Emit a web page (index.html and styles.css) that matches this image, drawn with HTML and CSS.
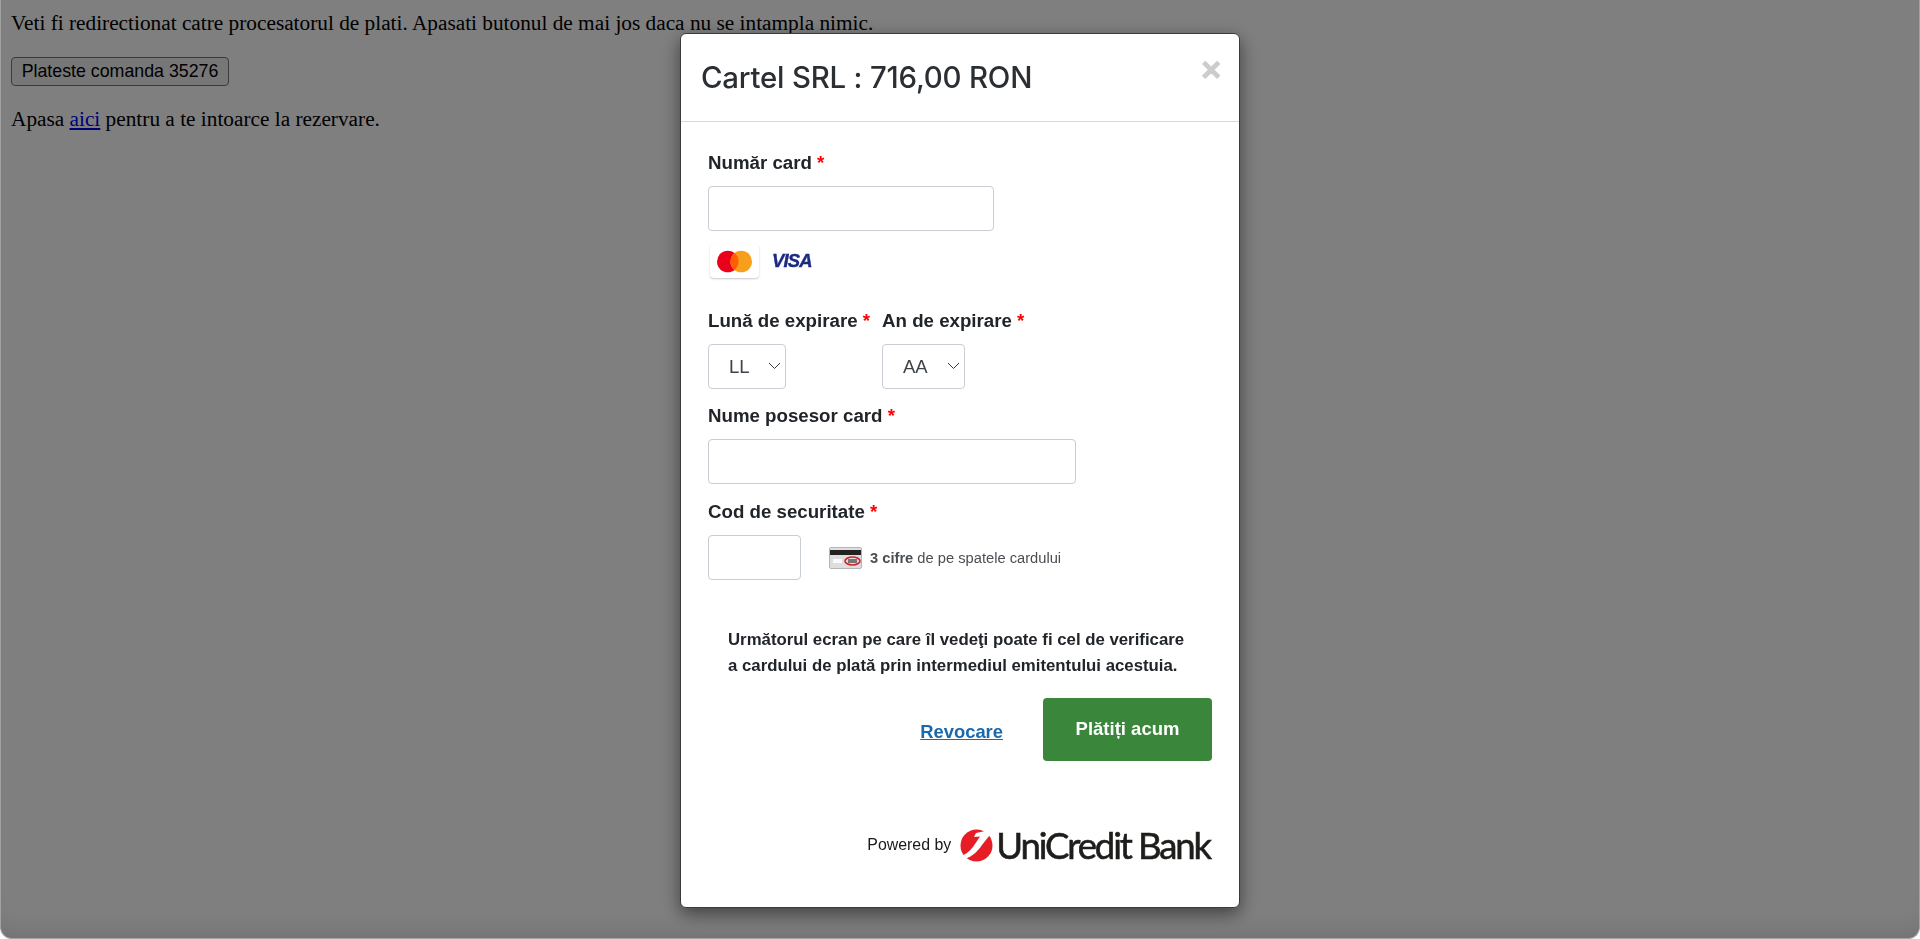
FILE: index.html
```html
<!DOCTYPE html>
<html lang="en">
<head>
    <meta charset="UTF-8">
    <meta name="viewport" content="width=device-width, initial-scale=1.0">
    <title>Plata comanda</title>
    <link rel="stylesheet" href="styles.css">
</head>
<body>
    <div class="page">
        <p class="line">Veti fi redirectionat catre procesatorul de plati. Apasati butonul de mai jos daca nu se intampla nimic.</p>
        <form class="pay-form"><button type="button" class="pay-btn">Plateste comanda 35276</button></form>
        <p class="line">Apasa <a href="#">aici</a> pentru a te intoarce la rezervare.</p>
    </div>

    <div class="overlay">
        <div class="modal">
            <div class="modal-header">
                <h3>Cartel SRL : 716,00 RON</h3>
                <span class="close">&times;</span>
            </div>
            <div class="modal-body">
                <label class="field-label">Număr card <span class="req">*</span></label>
                <input type="text" class="input input-card">
                <div class="card-logos">
                    <span class="mc-box">
                        <svg width="37" height="23" viewBox="0 0 36 22">
                            <circle cx="11.500" cy="11" r="10.500" fill="#eb001b"/>
                            <circle cx="24.500" cy="11" r="10.500" fill="#f79e1b"/>
                            <path d="M18 2.800a10.500 10.500 0 0 1 0 16.400a10.500 10.500 0 0 1 0-16.400z" fill="#ff5f00"/>
                        </svg>
                    </span>
                    <span class="visa">VISA</span>
                </div>

                <div class="expiry-row">
                    <div>
                        <label class="field-label">Lună de expirare <span class="req">*</span></label>
                        <div class="select-wrap select-month">
                            <select class="select"><option>LL</option></select>
                            <svg class="chevron" width="13" height="8" viewBox="0 0 13 8"><path d="M1 1l5.500 5.500L12 1" fill="none" stroke="#343a40" stroke-width="1"/></svg>
                        </div>
                    </div>
                    <div>
                        <label class="field-label">An de expirare <span class="req">*</span></label>
                        <div class="select-wrap select-year">
                            <select class="select"><option>AA</option></select>
                            <svg class="chevron" width="13" height="8" viewBox="0 0 13 8"><path d="M1 1l5.500 5.500L12 1" fill="none" stroke="#343a40" stroke-width="1"/></svg>
                        </div>
                    </div>
                </div>

                <label class="field-label label-name">Nume posesor card <span class="req">*</span></label>
                <input type="text" class="input input-name">

                <label class="field-label label-cvv">Cod de securitate <span class="req">*</span></label>
                <div class="cvv-row">
                    <input type="text" class="input input-cvv">
                    <svg class="cvv-icon" width="33" height="22" viewBox="0 0 33 22">
                        <rect x="0.500" y="0.500" width="32" height="21" rx="1.500" fill="#dedede" stroke="#b5b5b5"/>
                        <rect x="1" y="3" width="31" height="5" fill="#222"/>
                        <rect x="4" y="12" width="9" height="4" fill="#fafafa"/>
                        <rect x="19" y="12" width="9" height="4" fill="#777"/>
                        <ellipse cx="23.500" cy="14" rx="7.500" ry="4" fill="none" stroke="#d9202a" stroke-width="1.600"/>
                    </svg>
                    <span class="cvv-hint"><b>3 cifre</b> de pe spatele cardului</span>
                </div>

                <p class="notice">Următorul ecran pe care îl vedeţi poate fi cel de verificare<br>a cardului de plată prin intermediul emitentului acestuia.</p>

                <div class="actions">
                    <a href="#" class="cancel">Revocare</a>
                    <button type="button" class="submit">Plătiți acum</button>
                </div>

                <div class="powered">
                    <span class="powered-text">Powered by</span>
                    <svg class="uc-mark" width="33" height="33" viewBox="0 0 33 33">
                        <circle cx="16.500" cy="16.500" r="16" fill="#e71d25"/>
                        <path d="M33 2L30 1L16 4L14 8L20 7.500L15 15C12 20 8 24 2 27L5 30C13 27 18 22 22 16z" fill="#fff"/>
                    </svg>
                    <span class="uc-name">UniCredit Bank</span>
                </div>
            </div>
        </div>
    </div>
</body>
</html>
```

FILE: styles.css
```css
html {
    background: #000;
}
body {
    margin: 0;
    height: 939px;
    overflow: hidden;
    background: #fff;
    color: #000;
    font-family: "Liberation Serif", serif;
    font-size: 21.300px;
}
.page {
    padding: 12px 11px 0;
}
.line {
    margin: 0;
    line-height: 23px;
}
.line a {
    color: #00e;
}
.pay-form {
    margin: 22px 0 22px;
}
.pay-btn {
    display: block;
    width: 218px;
    height: 29px;
    padding: 0;
    background: #efefef;
    border: 1.200px solid #767676;
    border-radius: 4px;
    color: #000;
    font-family: "Liberation Sans", sans-serif;
    font-size: 17.800px;
}

.overlay {
    position: fixed;
    top: 0;
    left: 0;
    right: 0;
    bottom: 0;
    display: flex;
    justify-content: center;
    align-items: flex-start;
    background: rgba(0, 0, 0, 0.5);
    border-left: 1.500px solid #a2a2a2;
    border-right: 1.500px solid #a2a2a2;
    border-bottom: 1.500px solid #a2a2a2;
    border-radius: 0 0 12px 12px;
    box-shadow: inset 0 -22px 30px -22px rgba(0, 0, 0, 0.16);
}
.modal {
    width: 560px;
    height: 875px;
    margin-top: 33px;
    background: #fff;
    border: 1px solid #3c3c3c;
    border-radius: 6px;
    box-sizing: border-box;
    box-shadow: 0 6px 18px rgba(0, 0, 0, 0.5);
    font-family: "Liberation Sans", sans-serif;
    color: #212529;
}
.modal-header {
    position: relative;
    height: 87px;
    padding: 0 20px;
    display: flex;
    align-items: center;
    border-bottom: 1px solid #d5d8dc;
}
.modal-header h3 {
    margin: 0;
    font-family: Inter, sans-serif;
    font-size: 29.400px;
    font-weight: 500;
    letter-spacing: -0.200px;
    color: #2b2f33;
}
.close {
    position: absolute;
    top: 18px;
    right: 18px;
    color: #ccc;
    font-family: "Liberation Sans", sans-serif;
    font-size: 34px;
    font-weight: 700;
    line-height: 34px;
    -webkit-text-stroke: 1px #ccc;
}
.modal-body {
    padding: 29px 27px 0 27px;
}
.field-label {
    display: block;
    height: 24px;
    line-height: 24px;
    margin-bottom: 11px;
    font-size: 18.700px;
    font-weight: 700;
}
.req {
    color: #f00;
}
.input {
    display: block;
    height: 45px;
    padding: 0;
    background: #fff;
    border: 1.500px solid #c9cdd4;
    border-radius: 4px;
    box-sizing: border-box;
}
.input-card {
    width: 286px;
}
.input-name {
    width: 368px;
}
.input-cvv {
    width: 93px;
}
.card-logos {
    display: flex;
    align-items: center;
    height: 34px;
    margin: 13px 0 31px 2px;
}
.mc-box {
    display: flex;
    align-items: center;
    justify-content: center;
    width: 49px;
    height: 34px;
    background: #fff;
    border-radius: 4px;
    box-shadow: 0 1px 2px rgba(0, 0, 0, 0.22);
}
.visa {
    margin: 0 0 0 13px;
    color: #1a2b80;
    font-size: 18.400px;
    font-style: italic;
    font-weight: 700;
    letter-spacing: -0.800px;
    -webkit-text-stroke: 0.400px #1a2b80;
}
.expiry-row {
    display: flex;
    gap: 12px;
}
.select-wrap {
    position: relative;
}
.select-month {
    width: 78px;
}
.select-year {
    width: 83px;
}
.select {
    display: block;
    width: 100%;
    height: 45px;
    padding: 0 0 0 20px;
    background: #fff;
    border: 1.500px solid #c9cdd4;
    border-radius: 4px;
    color: #3d4348;
    font-family: "Liberation Sans", sans-serif;
    font-size: 18.500px;
    appearance: none;
}
.chevron {
    position: absolute;
    top: 18px;
    right: 5px;
}
.label-name {
    margin-top: 15px;
}
.label-cvv {
    margin-top: 16px;
}
.cvv-row {
    display: flex;
    align-items: center;
}
.cvv-icon {
    margin-left: 28px;
}
.cvv-hint {
    margin-left: 8px;
    color: #4a4f54;
    font-size: 14.700px;
}
.notice {
    margin: 47px 0 0 20px;
    font-size: 16.800px;
    font-weight: 700;
    line-height: 26px;
}
.actions {
    display: flex;
    justify-content: flex-end;
    align-items: center;
    margin-top: 19px;
}
.cancel {
    margin: 4px 40px 0 0;
    color: #1a69ae;
    font-size: 18.400px;
    font-weight: 700;
}
.submit {
    width: 169px;
    height: 63px;
    padding: 0 0 2px;
    background: #3a873c;
    border: none;
    border-radius: 4px;
    color: #fff;
    font-family: "Liberation Sans", sans-serif;
    font-size: 18.500px;
    font-weight: 700;
}
.powered {
    display: flex;
    justify-content: flex-end;
    align-items: center;
    margin-top: 64px;
}
.powered-text {
    font-size: 15.900px;
    color: #1a1a1a;
}
.uc-mark {
    margin-left: 9px;
}
.uc-name {
    margin: 0 2px 0 3px;
    color: #1d1d1b;
    font-family: Lato, sans-serif;
    font-size: 36.500px;
    line-height: 40px;
    letter-spacing: -2.100px;
    -webkit-text-stroke: 0.600px #1d1d1b;
}
```
